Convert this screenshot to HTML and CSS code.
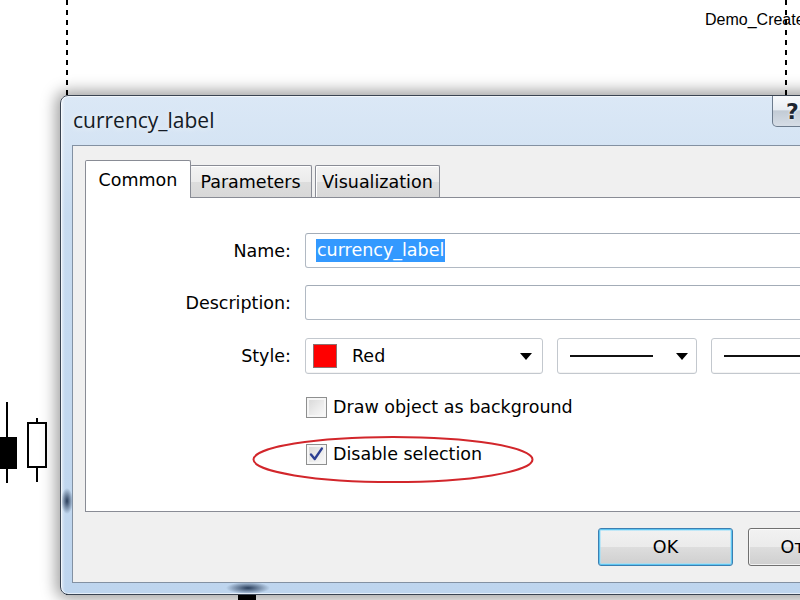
FILE: index.html
```html
<!DOCTYPE html>
<html>
<head>
<meta charset="utf-8">
<link rel="stylesheet" href="styles.css">
</head>
<body>
<div class="obj-label">Demo_Create</div>
<div class="vline vline-left"></div>
<div class="vline vline-right"></div>

<div class="candle c1"><div class="wick"></div><div class="cbody"></div></div>
<div class="candle c2"><div class="wick"></div><div class="cbody"></div></div>
<div class="candle c3"><div class="cbody"></div></div>

<div class="window">
  <div class="titlebar">
    <span class="title">currency_label</span>
    <div class="caption">
      <div class="help">?</div>
      <div class="close">✕</div>
    </div>
  </div>
  <div class="client">
    <div class="tabs">
      <div class="tab tab-common active">Common</div>
      <div class="tab tab-params">Parameters</div>
      <div class="tab tab-vis">Visualization</div>
    </div>
    <div class="panel">
      <div class="row row-name">
        <label>Name:</label>
        <div class="input"><span class="sel">currency_label</span></div>
      </div>
      <div class="row row-desc">
        <label>Description:</label>
        <div class="input"></div>
      </div>
      <div class="row row-style">
        <label>Style:</label>
        <div class="combos">
          <div class="combo combo-color">
            <span class="swatch"></span>
            <span class="combo-text">Red</span>
            <span class="arrow"></span>
          </div>
          <div class="combo combo-line">
            <span class="line"></span>
            <span class="arrow"></span>
          </div>
          <div class="combo combo-width">
            <span class="line"></span>
            <span class="arrow"></span>
          </div>
        </div>
      </div>
      <div class="row row-check">
        <span class="checkbox"></span>
        <span class="check-text">Draw object as background</span>
      </div>
      <div class="row row-check">
        <span class="checkbox checked">
          <svg viewBox="0 0 21 21" width="21" height="21"><path d="M5 10.5 L8.7 15 L15.8 4.6" fill="none" stroke="#2c3f92" stroke-width="2.4" stroke-linecap="round" stroke-linejoin="round"/></svg>
        </span>
        <span class="check-text">Disable selection</span>
      </div>
    </div>
    <div class="buttons">
      <button class="btn btn-default">OK</button>
      <button class="btn">Отмена</button>
      <button class="btn">Сброс</button>
    </div>
  </div>
</div>

<svg class="ellipse" width="290" height="55" viewBox="0 0 290 55">
  <ellipse cx="143" cy="26.5" rx="139.5" ry="22.5" fill="none" stroke="#d2262b" stroke-width="2"/>
</svg>
</body>
</html>
```

FILE: styles.css
```css
html, body {
  margin: 0;
  padding: 0;
}

body {
  width: 800px;
  height: 600px;
  overflow: hidden;
  position: relative;
  background: #ffffff;
  font-family: "DejaVu Sans", "Liberation Sans", sans-serif;
  color: #000;
}

/* chart canvas */
.obj-label {
  position: absolute;
  left: 705px;
  top: 11px;
  font-family: "Liberation Sans", sans-serif;
  font-size: 16px;
  color: #000;
  white-space: nowrap;
}

.vline {
  position: absolute;
  top: 0;
  width: 2px;
  height: 600px;
  background: repeating-linear-gradient(to bottom, #000 0 5px, transparent 5px 10px);
}

.vline-left { left: 66px; }
.vline-right { left: 785px; }

.candle {
  position: absolute;
}

.candle .wick {
  position: absolute;
  width: 2px;
  background: #000;
}

.candle .cbody {
  position: absolute;
  box-sizing: border-box;
}

.c1 { left: 0; top: 0; }
.c1 .wick { left: 6px; top: 402px; height: 81px; }
.c1 .cbody { left: 0; top: 437px; width: 17px; height: 32px; background: #000; }

.c2 { left: 0; top: 0; }
.c2 .wick { left: 36px; top: 418px; height: 64px; }
.c2 .cbody { left: 27px; top: 422px; width: 20px; height: 46px; background: #fff; border: 2px solid #000; }

.c3 { left: 0; top: 0; }
.c3 .cbody { left: 238px; top: 593px; width: 18px; height: 10px; background: #000; }

/* dialog window */
.window {
  position: absolute;
  left: 60px;
  top: 95px;
  width: 830px;
  height: 500px;
  box-sizing: border-box;
  border: 1px solid #3a4452;
  border-radius: 8px;
  display: flex;
  flex-direction: column;
  background:
    radial-gradient(ellipse 6px 13px at 6px 405px, rgba(15, 35, 65, 0.85), rgba(15, 35, 65, 0) 100%),
    radial-gradient(ellipse 22px 6px at 187px 492px, rgba(15, 35, 65, 0.85), rgba(15, 35, 65, 0) 100%),
    linear-gradient(90deg, rgba(255, 255, 255, 0.55) 0, rgba(255, 255, 255, 0) 4px),
    linear-gradient(180deg, #dbe8f6 0, #d5e4f4 48px, #c7dbf0 120px, #bed5ee 100%);
  box-shadow: 0 0 15px 4px rgba(0, 0, 0, 0.38), inset 0 0 0 1px rgba(255, 255, 255, 0.6);
}

.titlebar {
  height: 49px;
  display: flex;
  align-items: flex-start;
  flex: none;
}

.title {
  font-family: "Open Sans", "DejaVu Sans", sans-serif;
  font-size: 21px;
  line-height: 29px;
  padding: 10px 0 0 12px;
  color: #141b26;
  text-shadow: 0 0 6px rgba(255, 255, 255, 0.9);
}

.caption {
  margin-left: auto;
  margin-right: 8px;
  display: flex;
}

.help {
  width: 41px;
  height: 31px;
  box-sizing: border-box;
  border: 1px solid #6c7b8d;
  border-top: none;
  border-radius: 0 0 0 5px;
  background: linear-gradient(180deg, #f8fafc 0, #e8edf3 45%, #c2cbd5 50%, #d6dde6 100%);
  font-family: "DejaVu Sans", sans-serif;
  font-weight: bold;
  font-size: 22px;
  color: #1c2530;
  display: flex;
  align-items: center;
  justify-content: center;
  text-shadow: 0 0 3px #fff;
}

.close {
  width: 68px;
  height: 31px;
  box-sizing: border-box;
  border: 1px solid #6b2a23;
  border-top: none;
  border-left: none;
  border-radius: 0 0 5px 0;
  background: linear-gradient(180deg, #e8a493 0, #d86f5a 45%, #c23a1f 50%, #d2553a 100%);
  color: #fff;
  font-size: 16px;
  display: flex;
  align-items: center;
  justify-content: center;
}

.client {
  flex: 1;
  margin: 0 11px 11px 11px;
  border: 1px solid #8391a2;
  background: #f0f0f0;
  display: flex;
  flex-direction: column;
  font-size: 17.5px;
}

/* tabs */
.tabs {
  display: flex;
  align-items: flex-end;
  height: 37px;
  margin: 14px 0 0 12px;
  flex: none;
}

.tab {
  box-sizing: border-box;
  height: 32px;
  border: 1px solid #898c95;
  border-bottom: none;
  border-radius: 2px 2px 0 0;
  background: linear-gradient(180deg, #f3f3f3 0, #ebebeb 50%, #dddddd 51%, #d8d8d8 100%);
  box-shadow: inset 1px 1px 0 #fff;
  display: flex;
  align-items: center;
  justify-content: center;
  color: #000;
}

.tab.active {
  height: 38px;
  margin-bottom: -1px;
  background: #fff;
  box-shadow: none;
  position: relative;
  z-index: 1;
}

.tab-common { width: 106px; }
.tab-params { width: 122px; margin-left: -1px; border-left: none; }
.tab-vis { width: 125px; margin-left: 3px; }

.panel {
  flex: none;
  height: 315px;
  box-sizing: border-box;
  margin: 0 12px;
  border: 1px solid #898c95;
  background: #fff;
  padding-top: 35px;
}

.row {
  display: flex;
  align-items: center;
}

.row label {
  flex: none;
  width: 205px;
  margin-right: 14px;
  text-align: right;
}

.row-name { height: 35px; }
.row-desc { height: 35px; margin-top: 17px; }
.row-style { height: 36px; margin-top: 18px; }
.row-check { height: 26px; margin-top: 20px; padding-left: 220px; }
.row-check + .row-check { margin-top: 21px; }

.input {
  flex: 1;
  height: 35px;
  box-sizing: border-box;
  border: 1px solid #b1b9c3;
  border-top-color: #a3acb7;
  border-radius: 3px;
  background: #fff;
  display: flex;
  align-items: center;
}

.sel {
  margin-left: 10px;
  background: #3399ff;
  color: #fff;
  line-height: 23px;
  padding: 0 1px;
}

.combos {
  flex: 1;
  display: flex;
  gap: 14px;
  height: 36px;
}

.combo {
  box-sizing: border-box;
  height: 36px;
  border: 1px solid #c3c8ce;
  border-radius: 3px;
  background: #fff;
  display: flex;
  align-items: center;
  box-shadow: inset 0 -1px 0 #f4f4f4;
}

.combo-color { width: 238px; padding: 0 10px 0 7px; }
.combo-line { width: 140px; padding: 0 8px 0 12px; }
.combo-width { flex: 1; padding: 0 8px 0 12px; }

.swatch {
  width: 24px;
  height: 24px;
  box-sizing: border-box;
  background: #ff0000;
  border: 1px solid #8d7070;
  flex: none;
}

.combo-text {
  margin-left: 15px;
}

.arrow {
  margin-left: auto;
  width: 0;
  height: 0;
  border-left: 6px solid transparent;
  border-right: 6px solid transparent;
  border-top: 7px solid #000;
  flex: none;
}

.line {
  width: 83px;
  height: 2px;
  background: #111;
  flex: none;
}

.combo-width .line { width: 140px; }

.checkbox {
  width: 21px;
  height: 21px;
  box-sizing: border-box;
  border: 1px solid #8e8f8f;
  background: linear-gradient(135deg, #d6d6d6 0, #ececec 55%, #fbfbfb 100%);
  box-shadow: inset 0 0 0 2px #f6f6f6;
  flex: none;
  position: relative;
}

.checkbox svg {
  position: absolute;
  left: -1px;
  top: -1px;
}

.check-text {
  margin-left: 6px;
}

/* buttons */
.buttons {
  display: flex;
  gap: 15px;
  margin-top: 16px;
  padding-left: 525px;
}

.btn {
  flex: none;
  width: 135px;
  height: 38px;
  box-sizing: border-box;
  border: 1px solid #707070;
  border-radius: 3px;
  background: linear-gradient(180deg, #f2f2f2 0, #ebebeb 50%, #dddddd 51%, #cfcfcf 100%);
  box-shadow: inset 0 0 0 1px rgba(255, 255, 255, 0.7);
  font-family: "DejaVu Sans", sans-serif;
  font-size: 17.5px;
  color: #000;
  padding: 0;
}

.btn-default {
  border-color: #3c7fb1;
  box-shadow: inset 0 0 0 1px #5fc6f2, inset 0 0 0 2px rgba(160, 225, 250, 0.6);
}

.ellipse {
  position: absolute;
  left: 250px;
  top: 433px;
  z-index: 5;
}
```
